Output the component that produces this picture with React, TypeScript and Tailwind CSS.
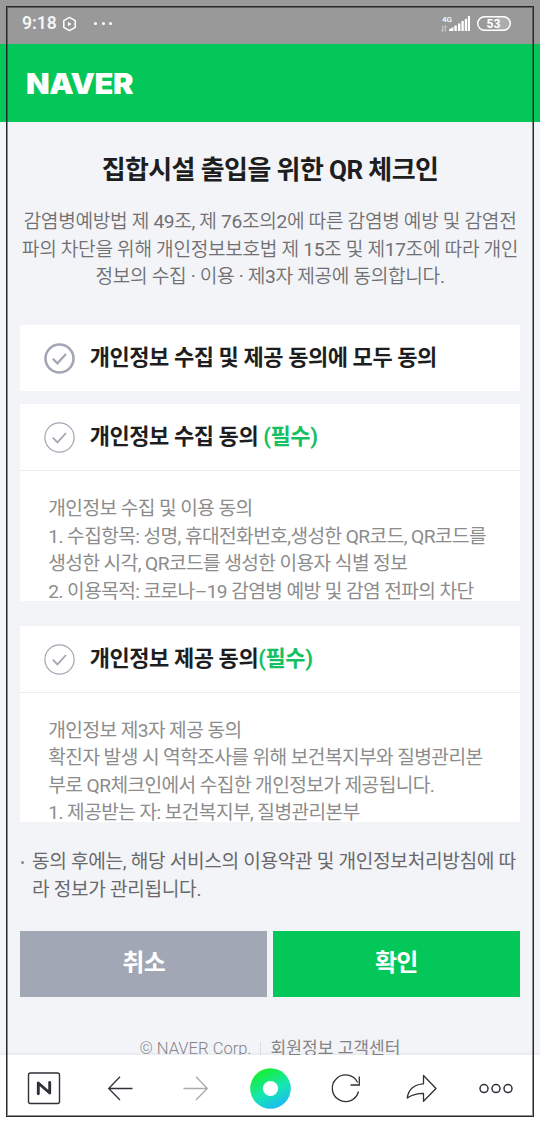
import type { ReactNode } from "react";
import { clsx } from "clsx";

const COLLECT_TERMS = [
  "개인정보 수집 및 이용 동의",
  "1. 수집항목: 성명, 휴대전화번호,생성한 QR코드, QR코드를",
  "생성한 시각, QR코드를 생성한 이용자 식별 정보",
  "2. 이용목적: 코로나–19 감염병 예방 및 감염 전파의 차단",
];

const PROVIDE_TERMS = [
  "개인정보 제3자 제공 동의",
  "확진자 발생 시 역학조사를 위해 보건복지부와 질병관리본",
  "부로 QR체크인에서 수집한 개인정보가 제공됩니다.",
  "1. 제공받는 자: 보건복지부, 질병관리본부",
];

function StatusBar() {
  return (
    <div className="flex h-[44px] shrink-0 items-center bg-[#999999] pt-[3px] pr-[29px] pl-[22px] text-white">
      <span className="w-[35px] whitespace-nowrap text-[17.5px] leading-none font-semibold text-white/90">9:18</span>
      <svg className="ml-[5px] h-4 w-[15px]" viewBox="0 0 15 16" fill="none">
        <path d="M7.5 1.4 13.2 4.6V11.4L7.5 14.6 1.8 11.4V4.6Z" stroke="white" strokeWidth="1.5" strokeLinejoin="round" />
        <path d="M6 6 9.6 8 6 10Z" fill="white" />
      </svg>
      <div className="ml-[17px] flex gap-[4.5px]">
        <i className="size-[3px] rounded-full bg-white" />
        <i className="size-[3px] rounded-full bg-white" />
        <i className="size-[3px] rounded-full bg-white" />
      </div>
      <div className="ml-auto flex items-center">
        <div className="flex h-4 w-[12px] flex-col items-center justify-between">
          <span className="text-[8px] leading-[7px] font-medium">4G</span>
          <svg className="mr-[7px] h-[7px] w-[6px]" viewBox="0 0 6 7" fill="none" stroke="white" strokeOpacity="0.55">
            <path d="M1.8 0.5V6.5L.3 5M4.2 6.5V.5L5.7 2" />
          </svg>
        </div>
        <svg className="-ml-[4px] h-[15px] w-[21px]" viewBox="0 0 21 15" fill="white">
          <path d="M0 15V13.6L4.4 11V15ZM5.4 9.5H7.8V15H5.4ZM9 7.5H11.4V15H9ZM12.4 5H14.8V15H12.4ZM15.8 3H18V15H15.8ZM18.8 0H21V15H18.8Z" />
        </svg>
        <div className="ml-[7px] flex h-[15px] w-[34px] items-center justify-center rounded-full bg-gradient-to-r from-transparent from-60% to-white/20 to-60% ring-[1.5px] ring-white ring-inset">
          <span className="pr-px text-[12px] leading-none font-bold">53</span>
        </div>
      </div>
    </div>
  );
}

function CheckCircle({ bold = false }: { bold?: boolean }) {
  return (
    <svg className="size-[31px] shrink-0" viewBox="0 0 31 31" fill="none" stroke="#a2a7b3">
      <circle cx="15.5" cy="15.5" r={bold ? 14 : 14.6} strokeWidth={bold ? 2.6 : 1.2} />
      <path d="M8.8 15.7 13.4 20.4 22 11" strokeWidth={bold ? 2.3 : 1.8} />
    </svg>
  );
}

function ConsentRow({ children, bold }: { children: ReactNode; bold?: boolean }) {
  return (
    <div className="flex h-[66px] shrink-0 items-center pt-px pl-[23.4px]">
      <CheckCircle bold={bold} />
      <strong className="ml-[15px] whitespace-nowrap pb-[1px] text-[22px] leading-[30px] font-bold tracking-[-0.43px] text-[#1e1e20]">
        {children}
      </strong>
    </div>
  );
}

function ConsentCard({ title, lines, className }: { title: ReactNode; lines: string[]; className?: string }) {
  return (
    <section className={clsx("flex h-[196.5px] flex-col overflow-hidden bg-white", className)}>
      <ConsentRow>{title}</ConsentRow>
      <div className="border-t border-[#ececee] pt-[24px] pl-[28px] text-[19.2px] leading-[27.5px] font-normal tracking-[-0.6px] text-[#8c8c8c]">
        {lines.map((line) => (
          <p key={line} className="whitespace-nowrap">
            {line}
          </p>
        ))}
      </div>
    </section>
  );
}

function BottomBar() {
  return (
    <nav className="relative flex h-[68.3px] shrink-0 items-end bg-white shadow-[0_-1px_4px_rgba(0,0,0,0.06)]">
      <svg className="h-[69px] w-[540px]" viewBox="0 0 540 69" fill="none" stroke="#2e3238" strokeWidth="1.3">
        <defs>
          <linearGradient id="home" x1="0.25" y1="0" x2="0.75" y2="1">
            <stop offset="0.1" stopColor="#16ee3b" />
            <stop offset="0.55" stopColor="#15e6b2" />
            <stop offset="1" stopColor="#1fb6fa" />
          </linearGradient>
        </defs>
        <rect x="28.5" y="19" width="31" height="30.5" rx="2" strokeWidth="1.4" />
        <path d="M38.3 39.7V29L49.7 39V28.5" strokeWidth="2.9" strokeLinecap="round" strokeLinejoin="round" />
        <path d="M132.5 34.5H109M120 22.8 108.7 34.5 120 46" />
        <path d="M183.5 34.5H207M196 22.8 207.3 34.5 196 46" stroke="#aaaaaa" />
        <circle cx="270.5" cy="34.5" r="20.3" fill="url(#home)" stroke="none" />
        <circle cx="270.5" cy="34.5" r="7.6" fill="white" stroke="none" />
        <path d="M358.5 37.5A13.3 13.3 0 1 1 357.6 28.5M359.3 22.5V31H350.5" />
        <path d="M423.5 21.5 436 34.5 423.5 47.3V39.3C416 39.3 411.5 41 407.3 44C408.3 35.5 414.5 30.2 423.5 29.8Z" strokeLinejoin="round" />
        <circle cx="484" cy="34.6" r="4" strokeWidth="1.5" />
        <circle cx="496" cy="34.6" r="4" strokeWidth="1.5" />
        <circle cx="508" cy="34.6" r="4" strokeWidth="1.5" />
      </svg>
    </nav>
  );
}

export default function App() {
  return (
    <div className="relative flex h-[1123px] w-[540px] flex-col overflow-hidden bg-[#f3f4f8] font-['Roboto','Noto_Sans_CJK_KR_DemiLight','Noto_Sans_CJK_KR',sans-serif]">
      <StatusBar />
      <header className="flex h-[77.5px] shrink-0 items-center bg-[#04c75a] pt-[2px] pl-[25.5px]">
        <span className="origin-left scale-x-[1.08] font-['Inter',sans-serif] text-[28.5px] leading-none font-black tracking-[-0.4px] text-white">
          NAVER
        </span>
      </header>

      <main className="flex min-h-0 flex-1 flex-col overflow-hidden px-[20.3px] font-['Roboto','Noto_Sans_CJK_KR',sans-serif]">
        <h1 className="mt-[29px] h-[38px] text-center text-[26px] leading-[38px] font-bold tracking-[-0.6px] whitespace-nowrap text-[#1e1e20]">
          집합시설 출입을 위한 QR 체크인
        </h1>
        <div className="-mx-2 mt-[19.5px] h-[83px] text-center font-['Roboto','Noto_Sans_CJK_KR_DemiLight','Noto_Sans_CJK_KR',sans-serif] text-[19.2px] leading-[27.5px] font-normal tracking-[-0.36px] whitespace-nowrap text-[#707072]">
          <p>감염병예방법 제 49조, 제 76조의2에 따른 감염병 예방 및 감염전</p>
          <p>파의 차단을 위해 개인정보보호법 제 15조 및 제17조에 따라 개인</p>
          <p>정보의 수집 · 이용 · 제3자 제공에 동의합니다.</p>
        </div>

        <section className="mt-[34px] shrink-0 bg-white">
          <ConsentRow bold>개인정보 수집 및 제공 동의에 모두 동의</ConsentRow>
        </section>
        <ConsentCard
          className="mt-[13.7px] shrink-0"
          title={
            <>
              개인정보 수집 동의 <span className="text-[#17bf63]">(필수)</span>
            </>
          }
          lines={COLLECT_TERMS}
        />
        <ConsentCard
          className="mt-[25.2px] shrink-0"
          title={
            <>
              개인정보 제공 동의<span className="text-[#17bf63]">(필수)</span>
            </>
          }
          lines={PROVIDE_TERMS}
        />

        <div className="mt-[26px] flex h-[55px] shrink-0 text-[19.2px] leading-[27.5px] font-normal tracking-[-0.36px] whitespace-nowrap text-[#69696b]">
          <i className="mt-[13px] mr-[7.7px] ml-[1px] size-[3px] shrink-0 rounded-full bg-[#8a8a8c]" />
          <div>
            <p>동의 후에는, 해당 서비스의 이용약관 및 개인정보처리방침에 따</p>
            <p>라 정보가 관리됩니다.</p>
          </div>
        </div>

        <div className="mt-[27.3px] grid h-[66px] shrink-0 grid-cols-2 gap-[6px] text-[24px] font-bold tracking-[-0.7px] text-white">
          <button className="bg-[#a1a7b4] pb-[2px]">취소</button>
          <button className="bg-[#04c75a] pb-[2px]">확인</button>
        </div>

        <footer className="mt-[39.5px] flex h-[24px] shrink-0 items-center justify-center text-[16.6px] leading-[24px] whitespace-nowrap text-[#858587]">
          <span className="pt-px font-light">© NAVER Corp.</span>
          <i className="mr-[9px] ml-[9px] h-[13px] w-px bg-[#dcdde1]" />
          <span className="text-[17.1px]">회원정보 고객센터</span>
        </footer>
      </main>

      <BottomBar />
      {/* device outline over the whole screen */}
      <div className="pointer-events-none absolute top-[6px] left-[6px] h-[1111px] w-[528px] border border-[#25282c] inset-ring inset-ring-[#25282c]/50" />
    </div>
  );
}
